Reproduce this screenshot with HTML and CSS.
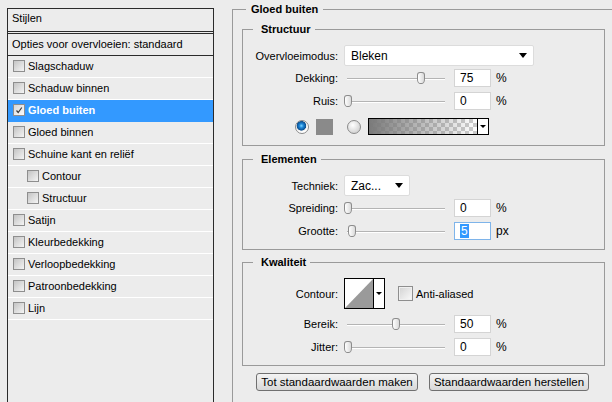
FILE: index.html
```html
<!DOCTYPE html>
<html lang="nl">
	<head>
		<meta charset="utf-8" />
		<title>Laagstijl - Gloed buiten</title>
		<link rel="stylesheet" href="styles.css">
	</head>
	<body>
		<div class="dialog">
			<div class="styles-list">
				<div class="list-head">Stijlen</div>
				<div class="list-blend">Opties voor overvloeien: standaard</div>
				<ul class="effects">
					<li><span class="box"></span>Slagschaduw</li>
					<li><span class="box"></span>Schaduw binnen</li>
					<li class="selected"><span class="box checked"><svg width="10" height="10" viewBox="0 0 10 10"><path d="M2.5 5.5 L4.2 7.5 L7.8 2.5" fill="none" stroke="#3a3a3a" stroke-width="1.2"/></svg></span>Gloed buiten</li>
					<li><span class="box"></span>Gloed binnen</li>
					<li><span class="box"></span>Schuine kant en reliëf</li>
					<li class="sub"><span class="box"></span>Contour</li>
					<li class="sub"><span class="box"></span>Structuur</li>
					<li><span class="box"></span>Satijn</li>
					<li><span class="box"></span>Kleurbedekking</li>
					<li><span class="box"></span>Verloopbedekking</li>
					<li><span class="box"></span>Patroonbedekking</li>
					<li><span class="box"></span>Lijn</li>
				</ul>
			</div>

			<fieldset class="panel">
				<legend>Gloed buiten</legend>

				<fieldset class="group">
					<legend>Structuur</legend>
					<div class="row row-select">
						<span class="label">Overvloeimodus:</span>
						<div class="select select-wide">Bleken<span class="arrow"></span></div>
					</div>
					<div class="row row-first">
						<span class="label">Dekking:</span>
						<div class="slider"><span class="thumb" style="left:73px"></span></div>
						<div class="num">75</div><span class="unit">%</span>
					</div>
					<div class="row">
						<span class="label">Ruis:</span>
						<div class="slider"><span class="thumb" style="left:0px"></span></div>
						<div class="num">0</div><span class="unit">%</span>
					</div>
					<div class="color-row">
						<span class="radio on"></span>
						<span class="swatch"></span>
						<span class="radio"></span>
						<span class="gradient"><span class="gradient-fill"></span><span class="drop"><span class="arrow small"></span></span></span>
					</div>
				</fieldset>

				<fieldset class="group">
					<legend>Elementen</legend>
					<div class="row row-select">
						<span class="label">Techniek:</span>
						<div class="select select-short">Zac...<span class="arrow"></span></div>
					</div>
					<div class="row row-first">
						<span class="label">Spreiding:</span>
						<div class="slider"><span class="thumb" style="left:0px"></span></div>
						<div class="num">0</div><span class="unit">%</span>
					</div>
					<div class="row">
						<span class="label">Grootte:</span>
						<div class="slider"><span class="thumb" style="left:4px"></span></div>
						<div class="num focus"><span class="picked">5</span></div><span class="unit">px</span>
					</div>
				</fieldset>

				<fieldset class="group">
					<legend>Kwaliteit</legend>
					<div class="row row-contour">
						<span class="label">Contour:</span>
						<div class="contour">
							<svg width="28" height="29" viewBox="0 0 28 29"><rect width="28" height="29" fill="#fff"/><polygon points="0,29 28,0 28,29" fill="#9a9a9a"/></svg>
							<span class="drop"><span class="arrow small"></span></span>
						</div>
						<span class="box big"></span><span class="check-label">Anti-aliased</span>
					</div>
					<div class="row row-after-contour">
						<span class="label">Bereik:</span>
						<div class="slider"><span class="thumb" style="left:48px"></span></div>
						<div class="num">50</div><span class="unit">%</span>
					</div>
					<div class="row">
						<span class="label">Jitter:</span>
						<div class="slider"><span class="thumb" style="left:0px"></span></div>
						<div class="num">0</div><span class="unit">%</span>
					</div>
				</fieldset>

				<div class="actions">
					<button class="btn btn-make">Tot standaardwaarden maken</button>
					<button class="btn btn-reset">Standaardwaarden herstellen</button>
				</div>
			</fieldset>
		</div>
	</body>
</html>
```

FILE: styles.css
```css
html, body {
	margin: 0;
	height: 100%;
	overflow: hidden;
}
body {
	background-color: #ECECEC;
	color: #000000;
	font: 11px "Liberation Sans", Arial, sans-serif;
}
.dialog {
	display: flex;
	align-items: flex-start;
	gap: 18px;
	padding: 2px 0 0 7px;
}

/* left list */
.styles-list {
	width: 205px;
	height: 393px;
	margin-top: 6px;
	border: 1px solid #2B2B2B;
	border-bottom: none;
	flex: none;
}
.list-head {
	height: 22px;
	line-height: 18px;
	padding-left: 4px;
	border-bottom: 3px double #2B2B2B;
}
.list-blend {
	height: 21px;
	line-height: 20px;
	padding-left: 4px;
	border-bottom: 1px solid #2B2B2B;
}
.effects {
	list-style: none;
	margin: 0;
	padding: 0;
}
.effects li {
	height: 20px;
	display: flex;
	align-items: center;
	gap: 3px;
	padding: 0 0 1px 5px;
	border-bottom: 1px solid #FFFFFF;
}
.effects li.sub {
	padding-left: 19px;
}
.effects li.selected {
	background-color: #3399FF;
	border-bottom-color: #3399FF;
	color: #FFFFFF;
	font-weight: bold;
}
.box {
	display: inline-block;
	width: 10px;
	height: 10px;
	border: 1px solid #8E8E8E;
	background: linear-gradient(135deg, #C4C4C4, #F4F4F4);
	flex: none;
}
.box svg {
	display: block;
}
.box.checked {
	background: linear-gradient(135deg, #D8D8D8, #FAFAFA);
}
.box.big {
	width: 13px;
	height: 13px;
	margin-left: 13px;
	background: linear-gradient(135deg, #D2D2D2, #FAFAFA);
	box-shadow: inset 0 0 0 1px #F0F0F0;
}
.check-label {
	margin-left: 3px;
}

/* right panel */
.panel {
	flex: 1;
	min-width: 0;
	height: 393px;
	margin: 0;
	padding: 6px 7px 0 9px;
	border: 1px solid #9A9A9A;
	border-right: none;
	border-bottom: none;
}
.panel > legend {
	margin-left: 4px;
	padding: 0 5px;
	line-height: 14px;
	font-weight: bold;
}
.group {
	margin: 0 0 6px 0;
	padding: 0 0 10px 0;
	border: 1px solid #9A9A9A;
	min-width: 0;
}
.group > legend {
	margin-left: 10px;
	padding: 0 4px 0 8px;
	line-height: 14px;
	font-weight: bold;
}
.group + .group {
	margin-bottom: 5px;
}
.group:nth-of-type(2) {
	padding-bottom: 9px;
}
.group:nth-of-type(3) {
	padding-bottom: 9px;
	margin-bottom: 7px;
}

.row {
	display: flex;
	align-items: center;
	height: 18px;
	margin-top: 5px;
}
.row-select {
	height: 21px;
	margin-top: 9px;
}
.row-first {
	margin-top: 3px;
}
.row-contour {
	height: 31px;
	margin-top: 9px;
}
.row-after-contour {
	margin-top: 6px;
}
.label {
	width: 95px;
	margin-right: 6px;
	text-align: right;
	flex: none;
}

.select {
	box-sizing: border-box;
	height: 21px;
	display: flex;
	align-items: center;
	justify-content: space-between;
	padding: 0 6px;
	background-color: #FFFFFF;
	border: 1px solid #DCDCDC;
	border-radius: 2px;
	font-size: 12px;
}
.select-wide {
	width: 190px;
}
.select-short {
	width: 66px;
}
.arrow {
	width: 0;
	height: 0;
	border-left: 4px solid transparent;
	border-right: 4px solid transparent;
	border-top: 5px solid #000000;
}
.arrow.small {
	border-left-width: 3px;
	border-right-width: 3px;
	border-top-width: 3px;
}

.slider {
	position: relative;
	width: 101px;
	height: 18px;
	margin-right: 9px;
	flex: none;
}
.slider::before {
	content: "";
	position: absolute;
	left: 3px;
	right: 0;
	top: 9px;
	height: 1px;
	background-color: #B4B4B4;
	box-shadow: 0 1px 0 #FFFFFF;
}
.thumb {
	position: absolute;
	top: 3px;
	width: 8px;
	height: 12px;
	box-sizing: border-box;
	border: 1px solid #8C8C8C;
	border-radius: 3px 3px 3px 3px / 3px 3px 5px 5px;
	background: linear-gradient(to right, #FFFFFF, #DADADA);
}
.num {
	box-sizing: border-box;
	width: 37px;
	height: 18px;
	line-height: 16px;
	padding-left: 5px;
	background-color: #FFFFFF;
	border: 1px solid #D4D4D4;
	font-size: 12px;
}
.num.focus {
	border-color: #7EB4EA;
}
.picked {
	background-color: #3399FF;
	color: #FFFFFF;
	padding: 0 1px;
}
.unit {
	margin-left: 5px;
	font-size: 12px;
}

.color-row {
	display: flex;
	align-items: center;
	height: 17px;
	margin-top: 8px;
	padding-left: 52px;
}
.radio {
	box-sizing: border-box;
	width: 14px;
	height: 14px;
	border-radius: 50%;
	border: 1px solid #8A8A8A;
	background: radial-gradient(circle at 40% 35%, #FFFFFF, #D6D6D6 70%);
	margin-left: 14px;
	flex: none;
}
.radio.on {
	margin-left: 0;
	background: radial-gradient(circle at 45% 40%, #7AD6FF 0, #1E86D8 2px, #0A4E8E 4.5px, #E8E8E8 5px, #FFFFFF 6px);
}
.swatch {
	width: 17px;
	height: 16px;
	margin-left: 7px;
	background-color: #8A8A8A;
}
.gradient {
	box-sizing: border-box;
	display: flex;
	width: 121px;
	height: 17px;
	margin-left: 7px;
	border: 1px solid #000000;
}
.gradient-fill {
	flex: 1;
	background:
		linear-gradient(to right, #7A7A7A, rgba(122, 122, 122, 0)),
		repeating-conic-gradient(#CCCCCC 0 25%, #FFFFFF 0 50%) 0 0 / 8px 8px;
}
.drop {
	width: 10px;
	display: flex;
	align-items: center;
	justify-content: center;
	border-left: 1px solid #000000;
	background-color: #FFFFFF;
}

.contour {
	box-sizing: border-box;
	display: flex;
	width: 41px;
	height: 31px;
	border: 1px solid #000000;
	background-color: #FFFFFF;
}
.contour svg {
	display: block;
}

.actions {
	display: flex;
	gap: 11px;
	padding-left: 14px;
}
.btn {
	box-sizing: border-box;
	height: 18px;
	padding: 0;
	font: 11.5px "Liberation Sans", Arial, sans-serif;
	color: #000000;
	border: 1px solid #707070;
	border-radius: 3px;
	background: linear-gradient(#F4F4F4, #E6E6E6 50%, #D8D8D8);
}
.btn-make {
	width: 162px;
}
.btn-reset {
	width: 160px;
}
```
